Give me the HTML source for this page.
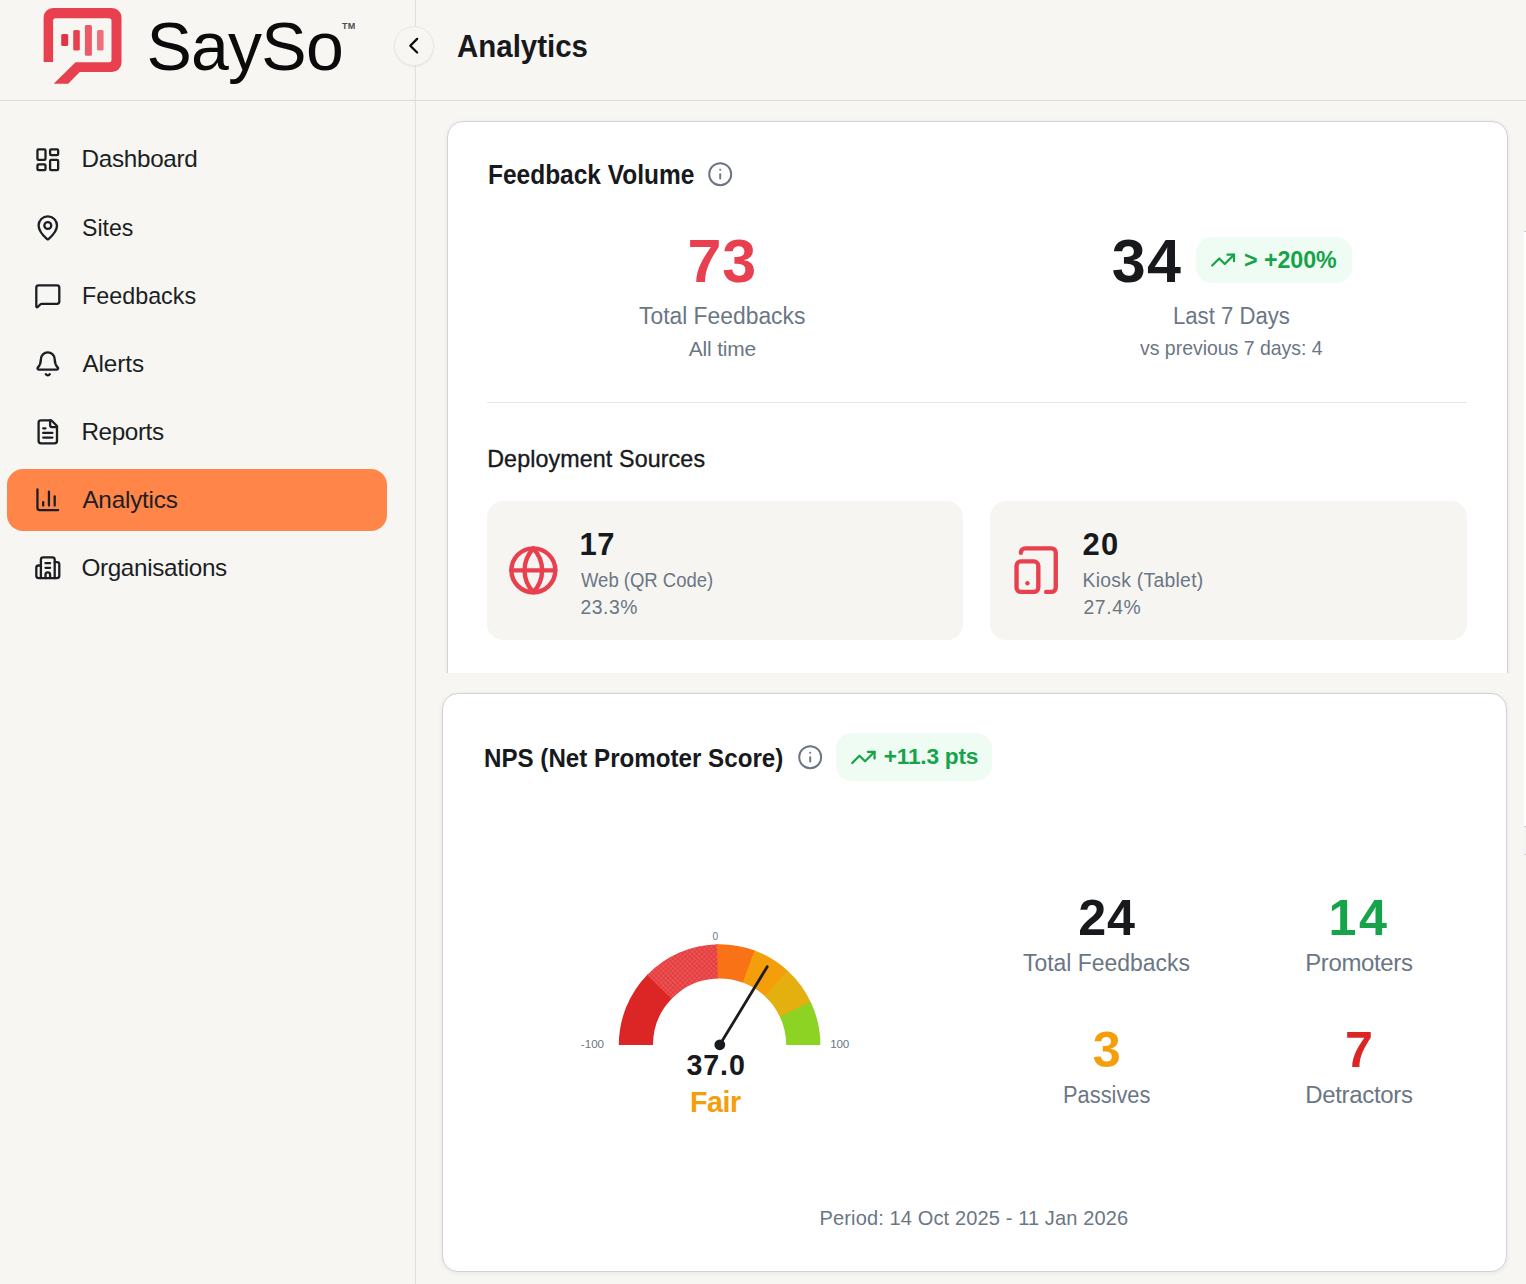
<!DOCTYPE html>
<html><head><meta charset="utf-8"><title>SaySo Analytics</title>
<style>
html,body{margin:0;padding:0}
body{width:1526px;height:1284px;overflow:hidden;position:relative;background:#f7f6f2;font-family:"Liberation Sans",sans-serif}
.t{position:absolute;white-space:nowrap;transform-origin:0 0;font-family:"Liberation Sans",sans-serif}
.a{position:absolute;box-sizing:border-box}
svg.i{position:absolute;fill:none;stroke-linecap:round;stroke-linejoin:round}
</style></head><body>
<!-- header & sidebar borders -->
<div class="a" style="left:0;top:100px;width:1526px;height:1px;background:#d8dbdc"></div>
<div class="a" style="left:414.6px;top:0;width:1px;height:1284px;background:#e0e0e0;box-shadow:-1px 0 3px rgba(0,0,0,.03)"></div>
<!-- collapse button -->
<div class="a" style="left:394.3px;top:25.6px;width:40px;height:40px;border-radius:50%;background:#f7f6f3;border:1px solid #e6e7e7;box-shadow:0 1px 2px rgba(0,0,0,.05)"></div>
<svg class="i" style="left:400.4px;top:32.2px" width="27.4" height="27.4" viewBox="0 0 24 24" stroke="#0b0b0c" stroke-width="2"><path d="m15 18-6-6 6-6"/></svg>
<!-- logo -->
<svg class="a" style="left:0;top:0" width="140" height="100" viewBox="0 0 140 100">
<path fill="#e8404f" d="M43.6 62.0 L43.6 17.5 A9.5 9.5 0 0 1 53.1 8.0 L112.0 8.0 A9.5 9.5 0 0 1 121.5 17.5 L121.5 62.5 A9.5 9.5 0 0 1 112.0 72.0 L79.8 72.0 L68.2 83.7 L53.7 83.7 L75.5 62.3 L109.0 62.3 A2.5 2.5 0 0 0 111.5 59.8 L111.5 20.8 A2.5 2.5 0 0 0 109.0 18.3 L55.6 18.3 A2.5 2.5 0 0 0 53.1 20.8 L53.1 62.0 Z"/>
<rect x="61.2" y="33.9" width="7" height="12.1" rx="1.5" fill="#e13543"/>
<rect x="73.2" y="30" width="6.6" height="20.6" rx="1.5" fill="#e8404f"/>
<rect x="84.9" y="24.9" width="7" height="30.8" rx="1.5" fill="#ec5a67"/>
<rect x="97" y="30" width="6.6" height="20.6" rx="1.5" fill="#ef6f7b"/>
</svg>
<!-- active nav -->
<div class="a" style="left:6.7px;top:469px;width:380.3px;height:62px;border-radius:16px;background:#ff8548"></div>
<!-- nav icons -->
<svg class="i" style="left:34px;top:145.7px" width="27.6" height="27.6" viewBox="0 0 24 24" stroke="#1b1f24" stroke-width="2"><rect width="7" height="9" x="3" y="3" rx="1"/><rect width="7" height="5" x="14" y="3" rx="1"/><rect width="7" height="9" x="14" y="12" rx="1"/><rect width="7" height="5" x="3" y="16" rx="1"/></svg>
<svg class="i" style="left:34px;top:213.7px" width="27.6" height="27.6" viewBox="0 0 24 24" stroke="#1b1f24" stroke-width="2"><path d="M20 10c0 4.993-5.539 10.193-7.399 11.799a1 1 0 0 1-1.202 0C9.539 20.193 4 14.993 4 10a8 8 0 0 1 16 0"/><circle cx="12" cy="10" r="3"/></svg>
<svg class="i" style="left:34px;top:281.7px" width="27.6" height="27.6" viewBox="0 0 24 24" stroke="#1b1f24" stroke-width="2"><path d="M22 17a2 2 0 0 1-2 2H6.828a2 2 0 0 0-1.414.586l-2.202 2.202A.71.71 0 0 1 2 21.286V5a2 2 0 0 1 2-2h16a2 2 0 0 1 2 2z"/></svg>
<svg class="i" style="left:34px;top:349.7px" width="27.6" height="27.6" viewBox="0 0 24 24" stroke="#1b1f24" stroke-width="2"><path d="M10.268 21a2 2 0 0 0 3.464 0"/><path d="M3.262 15.326A1 1 0 0 0 4 17h16a1 1 0 0 0 .74-1.673C19.41 13.956 18 12.499 18 8A6 6 0 0 0 6 8c0 4.499-1.411 5.956-2.738 7.326"/></svg>
<svg class="i" style="left:34px;top:417.7px" width="27.6" height="27.6" viewBox="0 0 24 24" stroke="#1b1f24" stroke-width="2"><path d="M15 2H6a2 2 0 0 0-2 2v16a2 2 0 0 0 2 2h12a2 2 0 0 0 2-2V7Z"/><path d="M14 2v4a2 2 0 0 0 2 2h4"/><path d="M10 9H8"/><path d="M16 13H8"/><path d="M16 17H8"/></svg>
<svg class="i" style="left:34px;top:485.7px" width="27.6" height="27.6" viewBox="0 0 24 24" stroke="#1b1f24" stroke-width="2"><path d="M3 3v16a2 2 0 0 0 2 2h16"/><path d="M18 17V9"/><path d="M13 17V5"/><path d="M8 17v-3"/></svg>
<svg class="i" style="left:34px;top:553.7px" width="27.6" height="27.6" viewBox="0 0 24 24" stroke="#1b1f24" stroke-width="2"><path d="M10 12h4"/><path d="M10 8h4"/><path d="M14 21v-3a2 2 0 0 0-4 0v3"/><path d="M6 10H4a2 2 0 0 0-2 2v7a2 2 0 0 0 2 2h16a2 2 0 0 0 2-2V9a2 2 0 0 0-2-2h-2"/><path d="M6 21V5a2 2 0 0 1 2-2h8a2 2 0 0 1 2 2v16"/></svg>
<!-- right edge peek -->
<div class="a" style="left:1524px;top:231px;width:2px;height:595px;background:#fff;border-top:1.5px solid #c9cdd3"></div>
<div class="a" style="left:1524px;top:826px;width:2px;height:29px;background:#f3f3f3;border-top:1.5px solid #c9cdd3;border-bottom:1.5px solid #c9cdd3"></div>
<!-- card 1 (clipped) -->
<div class="a" style="left:430px;top:110px;width:1090px;height:562.8px;overflow:hidden">
  <div class="a" style="left:16.6px;top:10.5px;width:1061.4px;height:700px;border:1.5px solid #cfd3d8;border-radius:16px;background:#fff;box-shadow:0 1px 5px rgba(0,0,0,.07)"></div>
</div>
<div class="a" style="left:487px;top:401.5px;width:980px;height:1px;background:#e7e5e1"></div>
<div class="a" style="left:487px;top:501px;width:476px;height:138.5px;border-radius:16px;background:#f6f5f2"></div>
<div class="a" style="left:990px;top:501px;width:477px;height:138.5px;border-radius:16px;background:#f6f5f2"></div>
<svg class="i" style="left:507.1px;top:544.4px" width="52.7" height="52.7" viewBox="0 0 24 24" stroke="#e8404f" stroke-width="2"><circle cx="12" cy="12" r="10"/><path d="M12 2a14.5 14.5 0 0 0 0 20 14.5 14.5 0 0 0 0-20"/><path d="M2 12h20"/></svg>
<svg class="i" style="left:1010.3px;top:544.4px" width="52.3" height="52.3" viewBox="0 0 24 24" stroke="#e8404f" stroke-width="2"><rect width="10" height="14" x="3" y="8" rx="2"/><path d="M5 4a2 2 0 0 1 2-2h12a2 2 0 0 1 2 2v16a2 2 0 0 1-2 2h-2.4"/><path d="M8 18h.01"/></svg>
<svg class="i" style="left:707.3px;top:160.9px" width="26.4" height="26.4" viewBox="0 0 24 24" stroke="#6b7685" stroke-width="1.8"><circle cx="12" cy="12" r="10"/><path d="M12 16v-4"/><path d="M12 8h.01"/></svg>
<div class="a" style="left:1195.5px;top:236.8px;width:156.5px;height:46px;border-radius:16px;background:#effcf3"></div>
<svg class="i" style="left:1209.5px;top:247px" width="26.2" height="26.2" viewBox="0 0 24 24" stroke="#16a34a" stroke-width="2"><path d="M16 7h6v6"/><path d="m22 7-8.5 8.5-5-5L2 17"/></svg>
<!-- card 2 -->
<div class="a" style="left:441.8px;top:692.8px;width:1065.2px;height:579.4px;border:1.5px solid #cfd3d8;border-radius:16px;background:#fff;box-shadow:0 1px 5px rgba(0,0,0,.07)"></div>
<svg class="i" style="left:796.5px;top:743.7px" width="26.4" height="26.4" viewBox="0 0 24 24" stroke="#6b7685" stroke-width="1.8"><circle cx="12" cy="12" r="10"/><path d="M12 16v-4"/><path d="M12 8h.01"/></svg>
<div class="a" style="left:836px;top:733.3px;width:156px;height:47.3px;border-radius:16px;background:#effcf3"></div>
<svg class="i" style="left:849.5px;top:743.6px" width="26.8" height="26.8" viewBox="0 0 24 24" stroke="#16a34a" stroke-width="2"><path d="M16 7h6v6"/><path d="m22 7-8.5 8.5-5-5L2 17"/></svg>
<svg class="a" style="left:560px;top:900px" width="320" height="160" viewBox="0 0 320 160"><defs><pattern id="dots" width="3.4" height="3.4" patternUnits="userSpaceOnUse" patternTransform="rotate(45)"><rect width="3.4" height="3.4" fill="#e8434e"/><circle cx="0.85" cy="0.85" r="0.55" fill="#f58a2a"/><circle cx="2.55" cy="2.55" r="0.5" fill="#c92a36"/></pattern></defs><path d="M58.80 145.00A100.8 100.8 0 0 1 87.83 74.22L112.18 98.24A66.6 66.6 0 0 0 93.00 145.00Z" fill="#dc2626"/><path d="M87.09 74.98A100.8 100.8 0 0 1 158.02 44.21L158.55 78.41A66.6 66.6 0 0 0 111.69 98.74Z" fill="url(#dots)"/><path d="M156.96 44.23A100.8 100.8 0 0 1 195.56 50.83L183.36 82.78A66.6 66.6 0 0 0 157.86 78.42Z" fill="#f97316"/><path d="M194.57 50.46A100.8 100.8 0 0 1 228.47 71.40L205.11 96.37A66.6 66.6 0 0 0 182.71 82.54Z" fill="#f59e0b"/><path d="M227.70 70.68A100.8 100.8 0 0 1 251.18 102.88L220.11 117.17A66.6 66.6 0 0 0 204.59 95.90Z" fill="#e3b00f"/><path d="M250.73 101.92A100.8 100.8 0 0 1 260.40 145.00L226.20 145.00A66.6 66.6 0 0 0 219.81 116.54Z" fill="#8cd323"/><line x1="159.8" y1="144.8" x2="207.2" y2="66.8" stroke="#1a1c20" stroke-width="2.8" stroke-linecap="round"/><circle cx="159.8" cy="144.8" r="5.4" fill="#1a1c20"/></svg>
<div class="t" style="left:146.50px;top:4.80px;font-size:68.02px;line-height:82px;font-weight:400;color:#0b0b0c;letter-spacing:-0.782px">SaySo</div>
<div class="t" style="left:341.90px;top:21.00px;font-size:9.01px;line-height:11px;font-weight:700;color:#4a4e55;letter-spacing:0.302px">TM</div>
<div class="t" style="left:456.70px;top:28.40px;font-size:31.4px;line-height:38px;font-weight:700;color:#17191d;transform:scaleX(0.9381)">Analytics</div>
<div class="t" style="left:81.60px;top:144.40px;font-size:24.27px;line-height:29px;font-weight:400;color:#1b1f24;letter-spacing:-0.314px">Dashboard</div>
<div class="t" style="left:81.65px;top:212.90px;font-size:24.27px;line-height:29px;font-weight:400;color:#1b1f24;transform:scaleX(0.9524)">Sites</div>
<div class="t" style="left:81.64px;top:281.00px;font-size:24.27px;line-height:29px;font-weight:400;color:#1b1f24;transform:scaleX(0.9612)">Feedbacks</div>
<div class="t" style="left:82.40px;top:349.00px;font-size:24.27px;line-height:29px;font-weight:400;color:#1b1f24;letter-spacing:-0.059px">Alerts</div>
<div class="t" style="left:81.40px;top:417.00px;font-size:24.27px;line-height:29px;font-weight:400;color:#1b1f24;letter-spacing:-0.372px">Reports</div>
<div class="t" style="left:82.40px;top:485.30px;font-size:24.27px;line-height:29px;font-weight:400;color:#1b1f24;letter-spacing:-0.208px">Analytics</div>
<div class="t" style="left:81.40px;top:553.00px;font-size:24.27px;line-height:29px;font-weight:400;color:#1b1f24;letter-spacing:-0.324px">Organisations</div>
<div class="t" style="left:488.13px;top:158.00px;font-size:28.05px;line-height:34px;font-weight:700;color:#17191d;transform:scaleX(0.8731)">Feedback Volume</div>
<div class="t" style="left:687.50px;top:225.00px;font-size:61.05px;line-height:73px;font-weight:700;color:#e8404f;letter-spacing:0.749px">73</div>
<div class="t" style="left:638.60px;top:300.90px;font-size:23.98px;line-height:29px;font-weight:400;color:#6b7685;transform:scaleX(0.9533)">Total Feedbacks</div>
<div class="t" style="left:688.80px;top:336.20px;font-size:20.93px;line-height:25px;font-weight:400;color:#6b7685;letter-spacing:-0.179px">All time</div>
<div class="t" style="left:1111.70px;top:225.00px;font-size:61.05px;line-height:73px;font-weight:700;color:#17191d;letter-spacing:1.349px">34</div>
<div class="t" style="left:1244.00px;top:245.80px;font-size:23.26px;line-height:28px;font-weight:700;color:#16a34a;letter-spacing:-0.068px">&gt; +200%</div>
<div class="t" style="left:1173.38px;top:301.00px;font-size:23.98px;line-height:29px;font-weight:400;color:#6b7685;transform:scaleX(0.9229)">Last 7 Days</div>
<div class="t" style="left:1140.30px;top:335.30px;font-size:20.93px;line-height:25px;font-weight:400;color:#6b7685;transform:scaleX(0.9294)">vs previous 7 days: 4</div>
<div class="t" style="left:487.20px;top:444.70px;font-size:23.26px;line-height:28px;font-weight:400;color:#17191d;letter-spacing:0.118px;-webkit-text-stroke:0.35px #17191d">Deployment Sources</div>
<div class="t" style="left:579.60px;top:525.60px;font-size:30.96px;line-height:37px;font-weight:700;color:#17191d;letter-spacing:0.485px">17</div>
<div class="t" style="left:580.60px;top:569.30px;font-size:19.33px;line-height:23px;font-weight:400;color:#6b7685;transform:scaleX(0.9567)">Web (QR Code)</div>
<div class="t" style="left:580.60px;top:595.80px;font-size:19.33px;line-height:23px;font-weight:400;color:#6b7685;letter-spacing:0.495px">23.3%</div>
<div class="t" style="left:1082.50px;top:525.50px;font-size:30.96px;line-height:37px;font-weight:700;color:#17191d;letter-spacing:1.185px">20</div>
<div class="t" style="left:1082.50px;top:569.30px;font-size:19.33px;line-height:23px;font-weight:400;color:#6b7685;letter-spacing:0.281px">Kiosk (Tablet)</div>
<div class="t" style="left:1083.50px;top:595.50px;font-size:19.33px;line-height:23px;font-weight:400;color:#6b7685;letter-spacing:0.595px">27.4%</div>
<div class="t" style="left:483.69px;top:741.60px;font-size:26.6px;line-height:32px;font-weight:700;color:#17191d;transform:scaleX(0.9082)">NPS (Net Promoter Score)</div>
<div class="t" style="left:883.80px;top:743.40px;font-size:22.67px;line-height:27px;font-weight:700;color:#16a34a;letter-spacing:-0.219px">+11.3 pts</div>
<div class="t" style="left:712.60px;top:930.60px;font-size:10.17px;line-height:12px;font-weight:400;color:#6b7685">0</div>
<div class="t" style="left:580.80px;top:1037.00px;font-size:11.63px;line-height:14px;font-weight:400;color:#6b7685">-100</div>
<div class="t" style="left:830.30px;top:1037.00px;font-size:11.63px;line-height:14px;font-weight:400;color:#6b7685;letter-spacing:-0.215px">100</div>
<div class="t" style="left:686.40px;top:1048.30px;font-size:28.63px;line-height:34px;font-weight:700;color:#17191d;letter-spacing:0.936px">37.0</div>
<div class="t" style="left:689.90px;top:1085.30px;font-size:28.63px;line-height:34px;font-weight:700;color:#f59e0b;letter-spacing:-0.419px">Fair</div>
<div class="t" style="left:1078.30px;top:887.80px;font-size:50.29px;line-height:60px;font-weight:700;color:#17191d;letter-spacing:0.736px">24</div>
<div class="t" style="left:1023.20px;top:947.50px;font-size:23.98px;line-height:29px;font-weight:400;color:#6b7685;transform:scaleX(0.9568)">Total Feedbacks</div>
<div class="t" style="left:1328.60px;top:887.80px;font-size:50.29px;line-height:60px;font-weight:700;color:#16a34a;letter-spacing:2.436px">14</div>
<div class="t" style="left:1305.20px;top:947.80px;font-size:23.98px;line-height:29px;font-weight:400;color:#6b7685;letter-spacing:-0.346px">Promoters</div>
<div class="t" style="left:1092.70px;top:1019.90px;font-size:50.29px;line-height:60px;font-weight:700;color:#f59e0b">3</div>
<div class="t" style="left:1063.09px;top:1079.60px;font-size:23.98px;line-height:29px;font-weight:400;color:#6b7685;transform:scaleX(0.9112)">Passives</div>
<div class="t" style="left:1344.90px;top:1019.90px;font-size:50.29px;line-height:60px;font-weight:700;color:#dc2626">7</div>
<div class="t" style="left:1305.20px;top:1079.60px;font-size:23.98px;line-height:29px;font-weight:400;color:#6b7685;letter-spacing:-0.307px">Detractors</div>
<div class="t" style="left:819.60px;top:1205.90px;font-size:20.06px;line-height:24px;font-weight:400;color:#6b7685;letter-spacing:0.111px">Period: 14 Oct 2025 - 11 Jan 2026</div>
</body></html>
